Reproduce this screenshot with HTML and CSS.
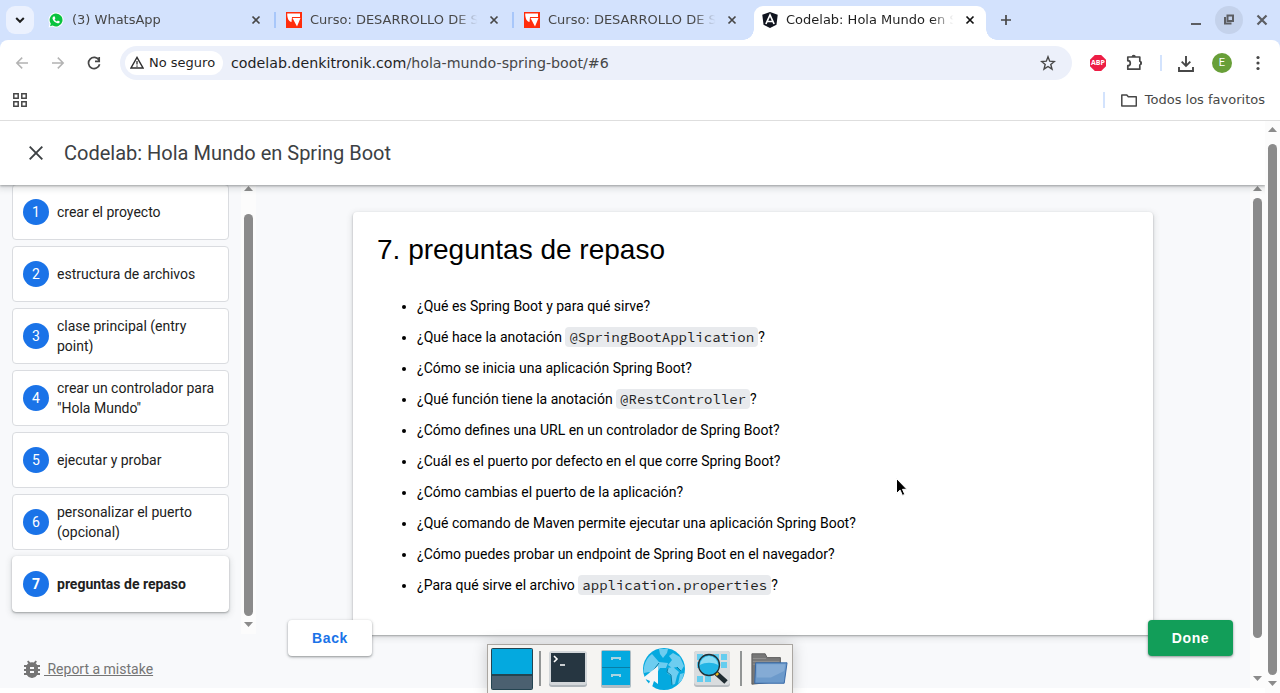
FILE: index.html
```html
<!DOCTYPE html>
<html lang="es">
<head>
<meta charset="utf-8">
<title>Codelab: Hola Mundo en Spring Boot</title>
<link rel="stylesheet" href="styles.css">
</head>
<body>
<svg class="defs" width="0" height="0">
  <symbol id="x" viewBox="0 0 10 10"><path d="M1.500 1.500l7 7M8.500 1.500l-7 7" fill="none" stroke="currentColor" stroke-width="1.700"/></symbol>
  <symbol id="course" viewBox="0 0 16 16"><path fill="#ff2d0c" d="M0 0h16v16H0z"/><path fill="#fff" d="M1.200 1.500H14V5H6L5.500 10C3 9.500 1.200 7 1.200 1.500z"/><path fill="#fff" d="M6.500 6h8L11 14.600z"/></symbol>
</svg>

<div class="tabstrip">
  <div class="tab-search"><svg width="10" height="10" viewBox="0 0 10 10"><path d="M1.200 3L5 6.800 8.800 3" fill="none" stroke="#1f1f1f" stroke-width="2"/></svg></div>
  <div class="tab">
    <svg class="favicon" viewBox="0 0 16 16"><path fill="#fff" d="M8 0.500a7.500 7.500 0 1 1-3.600 14.100L.6 15.600l1-3.800A7.500 7.500 0 0 1 8 .5z"/><path fill="#09c33f" d="M8 1.500a6.500 6.500 0 1 1-3.300 12.100l-2.700.7.800-2.600A6.500 6.500 0 0 1 8 1.500z"/><path fill="#fff" d="M5.500 4.400l1-.1.900 2-.8 1.100c.6 1 1.300 1.600 2.300 2l1-.9 1.900.9c0 1.500-1.200 2.100-2.300 1.900C7 10.800 4.800 8.500 4.500 6.600c-.1-.9.300-1.700 1-2.200z"/></svg>
    <span class="title first">(3) WhatsApp</span><svg class="close"><use href="#x"/></svg>
  </div>
  <div class="tab">
    <svg class="favicon"><use href="#course"/></svg>
    <span class="title">Curso: DESARROLLO DE S</span><svg class="close"><use href="#x"/></svg>
  </div>
  <div class="tab last">
    <svg class="favicon"><use href="#course"/></svg>
    <span class="title">Curso: DESARROLLO DE S</span><svg class="close"><use href="#x"/></svg>
  </div>
  <div class="tab active">
    <svg class="favicon" viewBox="0 0 16 16"><path fill="#10141f" d="M8 0l7.700 2.700-1.200 10L8 16l-6.500-3.300-1.200-10z"/><path d="M3.900 12L8 3l4.100 9M5.600 9.500h4.800" fill="none" stroke="#fff" stroke-width="1.700"/></svg>
    <span class="title">Codelab: Hola Mundo en S</span><svg class="close"><use href="#x"/></svg>
  </div>
  <svg class="newtab" width="12" height="12" viewBox="0 0 12 12"><path d="M6 1v10M1 6h10" stroke="#474747" stroke-width="1.700"/></svg>
  <div class="window-controls">
    <svg width="12" height="12"><path d="M1 10h10" stroke="#5c5e63" stroke-width="2"/></svg>
    <span class="restore"><svg width="12" height="12" viewBox="0 0 12 12"><path d="M4.500 1.500h5.500v5.500H4.500zM2 3v6.500h6.500" fill="none" stroke="#5c5e63" stroke-width="2"/></svg></span>
    <svg width="12" height="12" viewBox="0 0 12 12"><path d="M1.500 1.500l9 9M10.500 1.500l-9 9" stroke="#5c5e63" stroke-width="2.200"/></svg>
  </div>
</div>

<div class="toolbar-bed"><div class="toolbar">
  <svg width="14" height="14" viewBox="0 0 14 14"><path d="M13 7H2M7.200 1.600L1.800 7l5.400 5.400" fill="none" stroke="#b3b3b3" stroke-width="1.500"/></svg>
  <svg width="14" height="14" viewBox="0 0 14 14"><path d="M1 7h11M6.800 1.600L12.200 7l-5.400 5.400" fill="none" stroke="#b3b3b3" stroke-width="1.500"/></svg>
  <svg width="14" height="14" viewBox="0 0 14 14"><path d="M12 4.200A5.600 5.600 0 1 0 12.600 8.200M12.200 1v4.300H8" fill="none" stroke="#474747" stroke-width="1.700"/></svg>
  <div class="omnibox">
    <div class="chip"><svg width="14" height="13" viewBox="0 0 14 13"><path d="M7 1.400L13 12H1z" fill="none" stroke="#303030" stroke-width="1.400"/><path d="M7 5v3.500M7 9.500v1.300" stroke="#303030" stroke-width="1.300"/></svg>No seguro</div>
    <span class="url">codelab.denkitronik.com<i>/hola-mundo-spring-boot/#6</i></span>
    <svg class="star" width="16" height="16" viewBox="0 0 16 16"><path d="M8 1.800l1.700 4.400 4.700.3-3.600 3 1.200 4.600L8 11.500l-4 2.600 1.200-4.600-3.600-3 4.700-.3z" fill="none" stroke="#474747" stroke-width="1.400"/></svg>
  </div>
  <div class="actions">
    <span class="abp">ABP</span>
    <svg width="18" height="18" viewBox="0 0 18 18"><path d="M2.800 3h12v4.200a2 2 0 0 1 0 3.800v4.200h-12v-3.500a2.500 2.500 0 0 0 0-5z" fill="none" stroke="#474747" stroke-width="1.700" stroke-linejoin="round"/><path fill="#474747" d="M6.600 3a2.100 2.300 0 0 1 4.200 0zM15 6.800a2.300 2.300 0 0 1 0 4.500z"/></svg>
    <span class="divider"></span>
    <svg width="16" height="17" viewBox="0 0 16 17"><path d="M8 1v10M3.700 6.700L8 11l4.300-4.300M1 12v4h14v-4" fill="none" stroke="#474747" stroke-width="1.900"/></svg>
    <span class="avatar">E</span>
    <svg width="4" height="16" viewBox="0 0 4 16"><g fill="#474747"><circle cx="2" cy="2.500" r="1.600"/><circle cx="2" cy="8" r="1.600"/><circle cx="2" cy="13.500" r="1.600"/></g></svg>
  </div>
</div></div>

<div class="bookmarks">
  <svg width="14" height="14" viewBox="0 0 14 14"><path d="M.8.8h4.400v4.400H.8zM8.800.8h4.400v4.400H8.800zM.8 8.800h4.400v4.400H.8zM8.800 8.800h4.400v4.400H8.800z" fill="none" stroke="#474747" stroke-width="1.500"/></svg>
  <div class="all"><span class="divider"></span><svg width="16" height="13" viewBox="0 0 16 13"><path d="M.8 1h5l1.500 1.800h8V12H.8z" fill="none" stroke="#474747" stroke-width="1.500" stroke-linejoin="round"/></svg>Todos los favoritos</div>
</div>

<div class="viewport">
  <div class="page">
    <header><svg width="14" height="14" viewBox="0 0 14 14"><path d="M.7.700l12.600 12.600M13.300.700L.700 13.300" stroke="#3c4043" stroke-width="1.900"/></svg><h1>Codelab: Hola Mundo en Spring Boot</h1></header>
    <div class="columns">
      <aside>
        <div class="drawer">
          <ol class="steps">
            <li><b>1</b><span>crear el proyecto</span></li>
            <li><b>2</b><span>estructura de archivos</span></li>
            <li><b>3</b><span>clase principal (entry point)</span></li>
            <li><b>4</b><span>crear un controlador para "Hola Mundo"</span></li>
            <li><b>5</b><span>ejecutar y probar</span></li>
            <li><b>6</b><span>personalizar el puerto (opcional)</span></li>
            <li class="selected"><b>7</b><span>preguntas de repaso</span></li>
          </ol>
          <div class="scrollbar side"><i class="up"></i><span class="thumb"></span><i class="down"></i></div>
        </div>
        <div class="report"><svg width="16" height="18" viewBox="0 0 16 18"><path fill="#757575" fill-rule="evenodd" d="M16 5h-2.800a6 6 0 0 0-1.600-1.800L13 1.700 11.700.400 9.700 2.500a6 6 0 0 0-3.400 0L4.300.400 3 1.700l1.400 1.500A6 6 0 0 0 2.800 5H0v2h2.100L2 8v1H0v2h2v1l.1 1H0v2h2.800a6 6 0 0 0 10.400 0H16v-2h-2.100l.1-1v-1h2V9h-2V8l-.1-1H16zM6 7h4v2H6zm0 4h4v2H6z"/></svg><a>&nbsp;Report a mistake</a></div>
      </aside>
      <main>
        <article>
          <h2>7. preguntas de repaso</h2>
          <ul>
            <li>¿Qué es Spring Boot y para qué sirve?</li>
            <li>¿Qué hace la anotación <code>@SpringBootApplication</code>?</li>
            <li>¿Cómo se inicia una aplicación Spring Boot?</li>
            <li>¿Qué función tiene la anotación <code>@RestController</code>?</li>
            <li>¿Cómo defines una URL en un controlador de Spring Boot?</li>
            <li>¿Cuál es el puerto por defecto en el que corre Spring Boot?</li>
            <li>¿Cómo cambias el puerto de la aplicación?</li>
            <li>¿Qué comando de Maven permite ejecutar una aplicación Spring Boot?</li>
            <li>¿Cómo puedes probar un endpoint de Spring Boot en el navegador?</li>
            <li>¿Para qué sirve el archivo <code>application.properties</code>?</li>
          </ul>
        </article>
        <div class="nav"><a class="btn">Back</a><a class="btn done">Done</a></div>
      </main>
      <div class="scrollbar inner"><i class="up"></i><span class="thumb"></span><i class="down"></i></div>
    </div>
  </div>
  <div class="scrollbar outer"><i class="up"></i><span class="thumb"></span><i class="down"></i></div>
</div>

<div class="dock">
  <svg width="42" height="42" viewBox="0 0 42 42"><rect width="42" height="42" rx="2" fill="#244451"/><path fill="#04a9df" d="M1 1h40v25H1z"/><path fill="#4b6070" d="M1 28h40v13H1z"/></svg>
  <i></i>
  <svg class="terminal" width="40" height="38" viewBox="0 0 40 38"><rect x="1" y="2" width="38" height="35" rx="3" fill="#aeb5ba"/><rect x="1" y="1" width="38" height="34" rx="3" fill="#d3d7da"/><path fill="#263641" d="M3 3h34v29H3z"/><path d="M6 6l3 3-3 3M12 15h5" fill="none" stroke="#fff" stroke-width="1.600"/></svg>
  <svg class="cabinet" width="30" height="38" viewBox="0 0 30 38"><rect width="30" height="38" rx="2" fill="#aebdc5"/><path fill="#04a9df" d="M1 1h28v34H1z"/><path d="M1 17.500h28" stroke="#087ea6"/><path d="M11 10V8h8v2M11 27v-2h8v2" fill="none" stroke="#a9d4e1" stroke-width="2"/></svg>
  <svg width="42" height="42" viewBox="0 0 42 42"><circle cx="21" cy="21" r="21" fill="#04a9df"/><path fill="#6dcdf0" d="M16 1l9 0-1 4-4 5-3-4zM9 6l7 8 9 1-2 5-6 0-4 7-7-3-5 1C0 18 3 10 9 6zM30 5l7 4 4 9-3 5-4-4-5 1-4-3 4-5-3-4zM24 20l6-1 6 5-2 4-2 8-3 1-1-9-4-3zM37 26l4-1-2 7-4 4z"/><path d="M16 15l-7 9M25 20l-1 4 4 3 1 10M34 19l4 4" fill="none" stroke="#087ea6"/><path fill="#f5f6f7" d="M15 18v18l-4-3-3 9-4-2 3-7-7-3z"/></svg>
  <svg width="38" height="38" viewBox="0 0 38 38"><rect x="1" y="1" width="36" height="36" rx="3" fill="#b8bdc1"/><rect x="1" y="1" width="36" height="34" rx="3" fill="#d9dcde"/><path fill="#65cdef" d="M4 4h6v6H4zM12 4h6v6h-6zM20 4h6v6h-6zM28 4h6v6h-6zM4 12h6v6H4zM28 12h6v6h-6zM4 26h6v6H4zM12 26h6v6h-6z"/><path d="M23 23l10 9" stroke="#1f2b31" stroke-width="5"/><path d="M22 22l3 3" stroke="#f1bc20" stroke-width="3"/><circle cx="16" cy="15" r="10.500" fill="#22b5e5" stroke="#222f35" stroke-width="1.300"/><path fill="#8bdcf4" d="M7 15a9 9 0 0 1 18 0c-5-3-13-3-18 0z"/></svg>
  <i></i>
  <svg width="38" height="36" viewBox="0 0 40 36"><path fill="#777" stroke="#5d5d5d" d="M2 34V2h14l2 4h14v25z"/><path d="M3 7h14M3 10h28M3 13h28" stroke="#929292"/><path fill="#6c9acb" stroke="#3465a4" stroke-linejoin="round" d="M6 11.500h33L36 33H5z"/><path fill="#84abd5" d="M7 13h30l-1 7-14 7H7z"/></svg>
</div>
<svg class="cursor" width="13" height="20" viewBox="0 0 13 20"><path d="M.5.500v15l3.600-3.400 2.300 5.300 2.400-1-2.300-5.100h4.400z" fill="#000" stroke="#fff" stroke-width="1"/></svg>
</body>
</html>
```
FILE: styles.css
```css
* { box-sizing: border-box; }
body { margin: 0; height: 693px; overflow: hidden; display: flex; flex-direction: column; background: #fff; font-family: Roboto, sans-serif; position: relative; }
svg { flex: none; display: block; }
.defs { position: absolute; }

.tabstrip { height: 40px; flex: none; background: #d3e2fd; display: flex; align-items: center; padding-left: 6px; font: 13px "DejaVu Sans", sans-serif; color: #474747; }
.tab-search { width: 28px; height: 28px; border-radius: 9px; background: #ebf1fe; display: grid; place-items: center; margin-right: 6px; }
.tab { width: 238px; height: 34px; margin-top: 6px; padding: 0 17px 6px 8px; display: flex; align-items: center; position: relative; flex: none; }
.tab:not(.active):not(.last)::after { content: ""; position: absolute; right: 2px; top: 6px; width: 2px; height: 16px; background: #a8c7fa; }
.favicon { width: 16px; height: 16px; flex: none; }
.title { width: 171px; margin: 0 0 1px 8px; flex: none; white-space: nowrap; mask-image: linear-gradient(90deg, #000 85%, transparent 98%); }
.close { width: 10px; height: 10px; margin-left: 8px; flex: none; }
.tab.active { background: #fff; width: 232px; padding-right: 0; border-radius: 9px 9px 0 0; color: #1f1f1f; }
.tab.active .close { color: #111; }
.tab.active::before, .tab.active::after { content: ""; position: absolute; bottom: 0; width: 11px; height: 11px; }
.tab.active::before { left: -11px; background: radial-gradient(circle at 0 0, transparent 10.500px, #fff 11px); }
.tab.active::after { right: -11px; background: radial-gradient(circle at 100% 0, transparent 10.500px, #fff 11px); }
.newtab { margin-left: 14px; }
.window-controls { margin-left: auto; display: flex; align-items: center; gap: 13px; padding-right: 12px; }
.restore { width: 28px; height: 28px; border-radius: 50%; background: #c4d2eb; display: grid; place-items: center; }

.toolbar-bed { background: #d3e2fd; flex: none; }
.toolbar { height: 46px; display: flex; align-items: center; padding: 0 20px 0 15px; gap: 22px; font-family: "DejaVu Sans", sans-serif; background: #fff; border-radius: 8px 8px 0 0; }
.omnibox { width: 952px; height: 34px; margin-left: -3px; border-radius: 17px; background: #ecf0fa; display: flex; align-items: center; padding: 0 16px 0 5px; flex: none; }
.chip { width: 98px; height: 24px; border-radius: 12px; background: #fff; display: flex; align-items: center; gap: 5px; padding: 0 0 1px 5px; font-size: 13px; color: #1f1f1f; white-space: nowrap; }
.url { margin-left: 8px; font-size: 14.220px; color: #1f1f1f; white-space: nowrap; }
.url i { font-style: normal; color: #474747; }
.star { margin-left: auto; }
.actions { display: flex; align-items: center; margin-left: -4px; flex: none; }
.abp { width: 16px; height: 16px; background: #ed1e45; clip-path: polygon(30% 0, 70% 0, 100% 30%, 100% 70%, 70% 100%, 30% 100%, 0 70%, 0 30%); color: #fff; font: bold 7px/16px "Open Sans", sans-serif; text-align: center; margin-right: 19px; }
.divider { width: 2px; height: 16px; background: #d3e3fd; }
.actions .divider { margin: 0 16px 0 17px; }
.avatar { width: 20px; height: 20px; border-radius: 50%; background: #689f38; color: #fff; font: 11px/20px Roboto, sans-serif; text-align: center; margin: 0 24px 0 18px; }

.bookmarks { height: 35px; flex: none; border-bottom: 1px solid #dedede; display: flex; justify-content: space-between; align-items: flex-start; padding: 7px 15px 0 13px; font: 13px/14px "DejaVu Sans", sans-serif; color: #474747; }
.bookmarks .all { display: flex; align-items: center; margin-top: -1px; }
.all svg { margin: 0 8px 0 16px; }

.viewport { flex: 1; min-height: 0; display: flex; }
.page { width: 1265px; }
header { height: 64px; display: flex; align-items: center; padding-left: 29px; gap: 21px; background: #fff; box-shadow: 0 1px 2px rgba(60,64,67,.4), 0 2px 6px 2px rgba(60,64,67,.15); position: relative; z-index: 1; clip-path: inset(0 0 -12px 0); }
h1 { margin: 0; font-size: 20px; font-weight: 400; color: #3c4043; white-space: nowrap; }
.columns { height: 503px; display: flex; background: #f8f9fb; }
aside { width: 256px; flex: none; }
.drawer { height: 449px; overflow: hidden; display: flex; justify-content: space-between; }
.steps { list-style: none; margin: -1px 0 0; padding: 0 0 0 12px; display: flex; flex-direction: column; gap: 6px; font-size: 14px; line-height: 20px; color: #212121; }
.steps li { width: 217px; height: 56px; flex: none; background: #fff; border: 1px solid #dadce0; border-radius: 4px; display: flex; align-items: center; gap: 8px; padding: 0 10px; }
.steps b { width: 26px; height: 26px; border-radius: 50%; background: #1a73e8; color: #fff; text-align: center; line-height: 26px; font-weight: 400; flex: none; }
.steps .selected, .selected b { font-weight: 700; }
.steps .selected { border-color: #fff; box-shadow: 0 1px 2px rgba(60,64,67,.4), 0 2px 6px 1px rgba(60,64,67,.15); }
.report { display: flex; align-items: center; padding: 26px 0 0 24px; gap: 4px; font-size: 14px; line-height: 18px; color: #757575; }
.report a { text-decoration: underline; }

main { width: 994px; padding: 27px 97px 0; position: relative; }
article { width: 800px; height: 423px; background: #fff; border-radius: 4px; padding: 21px 24px; box-shadow: 0 1px 2px rgba(60,64,67,.4), 0 2px 6px 1px rgba(60,64,67,.15); color: #000; }
h2 { margin: 0 0 29px; font: 28px/34px "Liberation Sans", sans-serif; }
ul { margin: 0; padding-left: 40px; font-size: 14px; line-height: 21px; display: grid; gap: 10px; }
ul li { height: 21px; white-space: nowrap; }
code { font: 14px/18px "Source Code Pro", "Noto Sans Mono", "Liberation Mono", monospace; background: #e8eaed; color: #212121; border-radius: 4px; padding: 1px 4px; }
.nav { position: absolute; left: 32px; right: 17px; top: 435px; display: flex; justify-content: space-between; }
.btn { width: 84px; height: 36px; border-radius: 4px; background: #fff; color: #1a73e8; font: bold 14px/36px "Liberation Sans", sans-serif; letter-spacing: .6px; text-align: center; box-shadow: 0 1px 2px rgba(60,64,67,.4), 0 1px 3px 1px rgba(60,64,67,.15); }
.btn.done { width: 85px; background: #129e59; color: #fff; }

.scrollbar { width: 15px; flex: none; background: #fcfcfc; display: flex; flex-direction: column; align-items: center; }
.scrollbar i { width: 9px; height: 5px; background: #8b8b8b; clip-path: polygon(50% 0, 100% 100%, 0 100%); }
.scrollbar .down { clip-path: polygon(0 0, 100% 0, 50% 100%); }
.thumb { width: 9px; border-radius: 5px; background: #8b8b8b; }
.side .up, .inner .up { margin-top: 1px; }
.side .thumb { height: 402px; margin: 23px 0 6px; }
.inner .thumb { height: 440px; margin: 7px 0 38px; }
.outer .up { margin-top: 6px; }
.outer .thumb { height: 531px; margin: 12px 0 6px; }

.dock { position: absolute; left: 487px; top: 644px; width: 306px; height: 50px; background: #f5f4f2; border: 1px solid #aaa6a1; display: flex; align-items: center; padding: 0 0 1px 3px; gap: 6px; box-shadow: 0 0 14px rgba(0,0,0,.2); }
.dock i { width: 2px; height: 35px; flex: none; background: #929595; }
.dock i:last-of-type { margin: 0 2px 0 3px; }
.terminal { margin-left: 1px; }
.cabinet { margin-left: 7px; }
.cabinet + svg { margin-left: 6px; }
.cabinet + svg + svg { margin-left: 2px; }
.cursor { position: absolute; left: 896px; top: 478px; }
```
